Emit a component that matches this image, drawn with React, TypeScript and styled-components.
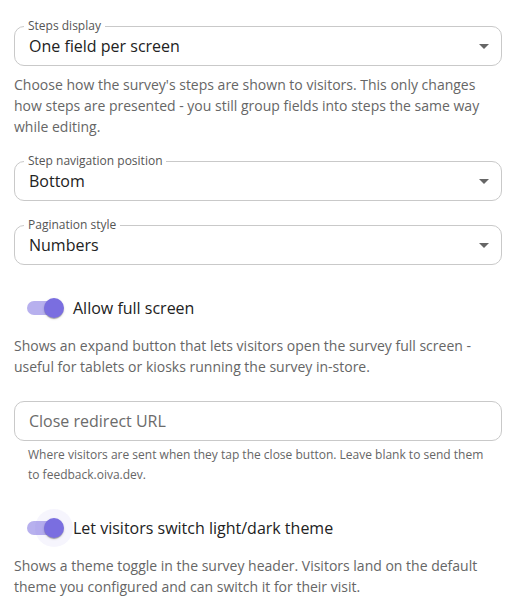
import React from 'react'
import styled, { createGlobalStyle } from 'styled-components'

const Global = createGlobalStyle`
  body {
    margin: 0;
    background: #fff;
    font-family: 'Open Sans', sans-serif;
    color: #222;
  }
`

const Page = styled.div`
  width: 488px;
  padding: 26px 15px 0 14px;
  display: flex;
  flex-direction: column;
  gap: 24px;
`

const Section = styled.div`
  display: flex;
  flex-direction: column;
`

const Field = styled.div`
  position: relative;
  padding: 0 14px;
  height: 40px;
  box-sizing: border-box;
  border: 1px solid #c9c9c9;
  border-radius: 10px;
  display: flex;
  align-items: center;
`

const Legend = styled.span`
  position: absolute;
  top: -9px;
  left: 9px;
  padding: 0 4px;
  background: #fff;
  font-size: 12px;
  line-height: 16px;
  color: #555;
`

const Value = styled.span<{ $placeholder?: boolean }>`
  flex: 1;
  font-size: 16px;
  line-height: 22px;
  color: ${(p) => (p.$placeholder ? '#6b6b6b' : '#222')};
`

const Arrow = styled.span`
  width: 0;
  height: 0;
  margin-right: -2px;
  border-left: 5px solid transparent;
  border-right: 5px solid transparent;
  border-top: 5px solid #666;
`

const Help = styled.p`
  margin: 8px 0 0;
  font-size: 14px;
  line-height: 21px;
  color: #666;
`

const SmallHelp = styled.p`
  margin: 4px 14px 0;
  font-size: 12px;
  line-height: 20px;
  color: #666;
`

const SwitchRow = styled.label`
  display: flex;
  align-items: center;
  height: 38px;
  padding-left: 1px;
`

const SwitchRoot = styled.span`
  position: relative;
  width: 58px;
  height: 38px;
  flex-shrink: 0;
`

const Track = styled.span`
  position: absolute;
  left: 12px;
  top: 12px;
  width: 34px;
  height: 14px;
  border-radius: 7px;
  background: #b7b0ee;
`

const Halo = styled.span`
  position: absolute;
  left: 20px;
  top: 0;
  width: 38px;
  height: 38px;
  border-radius: 50%;
  background: rgba(122, 110, 224, 0.07);
`

const Thumb = styled.span`
  position: absolute;
  left: 29px;
  top: 9px;
  width: 20px;
  height: 20px;
  border-radius: 50%;
  background: #7a6ee0;
  box-shadow: 0 2px 1px -1px rgba(0, 0, 0, 0.2), 0 1px 1px rgba(0, 0, 0, 0.14),
    0 1px 3px rgba(0, 0, 0, 0.12);
`

const SwitchLabel = styled.span`
  font-size: 16px;
  line-height: 24px;
  color: #222;
`

type SelectProps = { label: string; value: string }

const Select = ({ label, value }: SelectProps) => (
  <Field>
    <Legend>{label}</Legend>
    <Value>{value}</Value>
    <Arrow />
  </Field>
)

type ToggleProps = { label: string; focused?: boolean }

const Toggle = ({ label, focused }: ToggleProps) => (
  <SwitchRow>
    <SwitchRoot>
      <Track />
      {focused && <Halo />}
      <Thumb />
    </SwitchRoot>
    <SwitchLabel>{label}</SwitchLabel>
  </SwitchRow>
)

export default function App() {
  return (
    <>
      <Global />
      <Page>
        <Section>
          <Select label="Steps display" value="One field per screen" />
          <Help>
            Choose how the survey's steps are shown to visitors. This only changes how steps
            are presented - you still group fields into steps the same way while editing.
          </Help>
        </Section>

        <Select label="Step navigation position" value="Bottom" />

        <Select label="Pagination style" value="Numbers" />

        <Section>
          <Toggle label="Allow full screen" />
          <Help>
            Shows an expand button that lets visitors open the survey full screen - useful for
            tablets or kiosks running the survey in-store.
          </Help>
        </Section>

        <Section>
          <Field>
            <Value $placeholder>Close redirect URL</Value>
          </Field>
          <SmallHelp>
            Where visitors are sent when they tap the close button. Leave blank to send them to
            feedback.oiva.dev.
          </SmallHelp>
        </Section>

        <Section>
          <Toggle label="Let visitors switch light/dark theme" focused />
          <Help>
            Shows a theme toggle in the survey header. Visitors land on the default theme you
            configured and can switch it for their visit.
          </Help>
        </Section>
      </Page>
    </>
  )
}
